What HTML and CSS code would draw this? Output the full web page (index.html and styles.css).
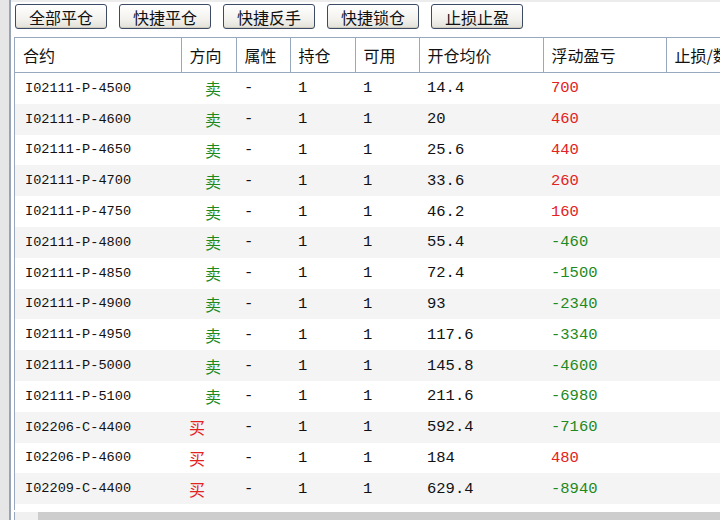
FILE: index.html
```html
<!doctype html>
<html>
<head>
<meta charset="UTF-8">
<title>持仓</title>
<link rel="stylesheet" href="styles.css">
</head>
<body>
<div class="frame">
  <div class="side"></div>
  <div class="main">
    <div class="toolbar">
      <button class="btn">全部平仓</button>
      <button class="btn">快捷平仓</button>
      <button class="btn">快捷反手</button>
      <button class="btn">快捷锁仓</button>
      <button class="btn">止损止盈</button>
    </div>
    <div class="grid">
      <table class="pos">
        <colgroup>
          <col class="c-code"><col class="c-dir"><col class="c-attr"><col class="c-hold">
          <col class="c-avail"><col class="c-price"><col class="c-pnl"><col class="c-stop">
        </colgroup>
        <thead>
          <tr><th>合约</th><th>方向</th><th>属性</th><th>持仓</th><th>可用</th><th>开仓均价</th><th>浮动盈亏</th><th>止损/数</th></tr>
        </thead>
        <tbody>
          <tr><td class="code">I02111-P-4500</td><td class="sell">卖</td><td class="num">-</td><td class="num">1</td><td class="num">1</td><td class="num">14.4</td><td class="num up">700</td><td></td></tr>
          <tr><td class="code">I02111-P-4600</td><td class="sell">卖</td><td class="num">-</td><td class="num">1</td><td class="num">1</td><td class="num">20</td><td class="num up">460</td><td></td></tr>
          <tr><td class="code">I02111-P-4650</td><td class="sell">卖</td><td class="num">-</td><td class="num">1</td><td class="num">1</td><td class="num">25.6</td><td class="num up">440</td><td></td></tr>
          <tr><td class="code">I02111-P-4700</td><td class="sell">卖</td><td class="num">-</td><td class="num">1</td><td class="num">1</td><td class="num">33.6</td><td class="num up">260</td><td></td></tr>
          <tr><td class="code">I02111-P-4750</td><td class="sell">卖</td><td class="num">-</td><td class="num">1</td><td class="num">1</td><td class="num">46.2</td><td class="num up">160</td><td></td></tr>
          <tr><td class="code">I02111-P-4800</td><td class="sell">卖</td><td class="num">-</td><td class="num">1</td><td class="num">1</td><td class="num">55.4</td><td class="num down">-460</td><td></td></tr>
          <tr><td class="code">I02111-P-4850</td><td class="sell">卖</td><td class="num">-</td><td class="num">1</td><td class="num">1</td><td class="num">72.4</td><td class="num down">-1500</td><td></td></tr>
          <tr><td class="code">I02111-P-4900</td><td class="sell">卖</td><td class="num">-</td><td class="num">1</td><td class="num">1</td><td class="num">93</td><td class="num down">-2340</td><td></td></tr>
          <tr><td class="code">I02111-P-4950</td><td class="sell">卖</td><td class="num">-</td><td class="num">1</td><td class="num">1</td><td class="num">117.6</td><td class="num down">-3340</td><td></td></tr>
          <tr><td class="code">I02111-P-5000</td><td class="sell">卖</td><td class="num">-</td><td class="num">1</td><td class="num">1</td><td class="num">145.8</td><td class="num down">-4600</td><td></td></tr>
          <tr><td class="code">I02111-P-5100</td><td class="sell">卖</td><td class="num">-</td><td class="num">1</td><td class="num">1</td><td class="num">211.6</td><td class="num down">-6980</td><td></td></tr>
          <tr><td class="code">I02206-C-4400</td><td class="buy">买</td><td class="num">-</td><td class="num">1</td><td class="num">1</td><td class="num">592.4</td><td class="num down">-7160</td><td></td></tr>
          <tr><td class="code">I02206-P-4600</td><td class="buy">买</td><td class="num">-</td><td class="num">1</td><td class="num">1</td><td class="num">184</td><td class="num up">480</td><td></td></tr>
          <tr><td class="code">I02209-C-4400</td><td class="buy">买</td><td class="num">-</td><td class="num">1</td><td class="num">1</td><td class="num">629.4</td><td class="num down">-8940</td><td></td></tr>
        </tbody>
      </table>
    </div>
    <div class="hscroll"><span class="arrow"></span><span class="thumb"></span></div>
  </div>
</div>
</body>
</html>
```

FILE: styles.css
```css
body { margin: 0; background: #fff; font-family: "Noto Sans CJK SC", sans-serif; font-size: 16px; color: #111; overflow: hidden; }
.frame { display: flex; height: 520px; }
.side { width: 9px; flex: none; background: #e6e6e6; border-right: 2px solid #98a4b6; }
.main { flex: 1; min-width: 0; display: flex; flex-direction: column; border-top: 2px solid #ececec; padding-left: 3px; }
.toolbar { display: flex; gap: 12px; padding: 2px 0 0 1px; height: 35px; flex: none; box-sizing: border-box; }
.btn { width: 92px; height: 25px; padding: 0; font-family: "Noto Sans CJK SC", sans-serif; font-size: 16px; line-height: 22px; color: #111; background: linear-gradient(#ffffff, #f3f2ee 60%, #e2e0d8); border: 1px solid #3c4a66; border-radius: 3px; box-shadow: inset 0 -1px 0 #cfcbbd; }
.grid { height: 473px; flex: none; overflow: hidden; border-left: 1px solid #98a8bf; }
.pos { border-collapse: collapse; table-layout: fixed; width: 780px; }
.c-code { width: 166px; }
.c-dir { width: 55px; }
.c-attr { width: 54px; }
.c-hold { width: 65px; }
.c-avail { width: 64px; }
.c-price { width: 124px; }
.c-pnl { width: 123px; }
.c-stop { width: 129px; }
.pos th { height: 34px; text-align: left; font-weight: normal; padding: 0 0 0 8px; border-top: 1px solid #98a8bf; border-bottom: 1px solid #98a8bf; border-right: 1px solid #98a8bf; background: #fff; white-space: nowrap; overflow: hidden; }
.pos td { height: 30.8px; padding: 0 0 0 8px; white-space: nowrap; }
.pos tbody tr:nth-child(even) td { background: #f4f4f4; }
.code { font-family: "Liberation Mono", monospace; font-size: 13.6px; padding-left: 10px !important; }
.num { font-family: "Liberation Mono", monospace; font-size: 15.5px; }
.sell { color: #1d8a1d; padding-left: 24px !important; }
.buy { color: #e32222; }
.up { color: #e32222; }
.down { color: #1d8a1d; }
.hscroll { display: flex; height: 8px; flex: none; margin-top: 2px; border-left: 1px solid #98a8bf; }
.arrow { width: 23px; background: #f0f0f0; }
.thumb { flex: 1; background: #cdcdcd; }
```
